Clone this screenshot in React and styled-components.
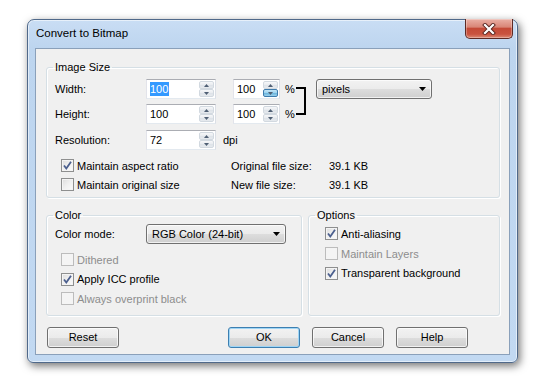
import React from 'react';
import styled, { createGlobalStyle } from 'styled-components';

const GlobalStyle = createGlobalStyle`
  html, body {
    margin: 0;
    padding: 0;
    background: #fff;
  }
  body {
    font-family: "Liberation Sans", Arial, sans-serif;
    font-size: 11px;
    color: #000;
  }
`;

export default function App() {
  return (
    <>
      <GlobalStyle />
      <Page>
        <Window>
          <TitleBar>
            <Title>Convert to Bitmap</Title>
            <CloseButton>
              <svg width="14" height="12" viewBox="0 0 14 12">
                <path d="M3 2 L11 10 M11 2 L3 10" stroke="#5a2620" strokeWidth="4" strokeLinecap="square" />
                <path d="M3 2 L11 10 M11 2 L3 10" stroke="#fff" strokeWidth="2.2" strokeLinecap="square" />
              </svg>
            </CloseButton>
          </TitleBar>

          <Client>
            <Group $bottom={3}>
              <Legend>Image Size</Legend>
              <SizeArea>
                <Fields>
                  <Row>
                    <Label>Width:</Label>
                    <Spin value="100" width={70} selected />
                    <Spin value="100" width={47} pressed gap={17} />
                    <Unit>%</Unit>
                  </Row>
                  <Row>
                    <Label>Height:</Label>
                    <Spin value="100" width={70} />
                    <Spin value="100" width={47} gap={17} />
                    <Unit>%</Unit>
                  </Row>
                </Fields>
                <Bracket />
                <Combo $width={116} $gap={10}>
                  <span>pixels</span>
                  <ComboArrow />
                </Combo>
              </SizeArea>
              <Row $top={6}>
                <Label>Resolution:</Label>
                <Spin value="72" width={70} />
                <Dpi>dpi</Dpi>
              </Row>
              <InfoGrid>
                <Check checked label="Maintain aspect ratio" />
                <Info>
                  <InfoLabel>Original file size:</InfoLabel>
                  <span>39.1 KB</span>
                </Info>
                <Check label="Maintain original size" />
                <Info>
                  <InfoLabel>New file size:</InfoLabel>
                  <span>39.1 KB</span>
                </Info>
              </InfoGrid>
            </Group>

            <LowerGroups>
              <Group $width={256} $top={2} $bottom={6}>
                <Legend>Color</Legend>
                <Row>
                  <Label>Color mode:</Label>
                  <Combo $width={140}>
                    <span>RGB Color (24-bit)</span>
                    <ComboArrow />
                  </Combo>
                </Row>
                <CheckList $top={6}>
                  <Check disabled label="Dithered" />
                  <Check checked label="Apply ICC profile" />
                  <Check disabled label="Always overprint black" />
                </CheckList>
              </Group>
              <Group $grow $top={2} $bottom={6}>
                <Legend>Options</Legend>
                <CheckList $indent={2} $pitch={19.7}>
                  <Check checked label="Anti-aliasing" />
                  <Check disabled label="Maintain Layers" />
                  <Check checked label="Transparent background" />
                </CheckList>
              </Group>
            </LowerGroups>

            <ButtonBar>
              <Button>Reset</Button>
              <Spacer />
              <Button $default>OK</Button>
              <Button>Cancel</Button>
              <Button>Help</Button>
            </ButtonBar>
          </Client>
        </Window>
      </Page>
    </>
  );
}

function Spin({ value, width, selected, pressed, gap = 0 }) {
  return (
    <SpinBox $width={width} $gap={gap}>
      <SpinText $selected={selected}>{value}</SpinText>
      <SpinButtons>
        <SpinHalf>
          <Arrow up />
        </SpinHalf>
        <SpinHalf $pressed={pressed}>
          <Arrow />
        </SpinHalf>
      </SpinButtons>
    </SpinBox>
  );
}

function Arrow({ up }) {
  return (
    <svg width="5" height="3" viewBox="0 0 5 3">
      <path d={up ? 'M0 3 L2.5 0 L5 3 Z' : 'M0 0 L5 0 L2.5 3 Z'} fill="#4f5f74" />
    </svg>
  );
}

function ComboArrow() {
  return (
    <svg width="7" height="4" viewBox="0 0 7 4">
      <path d="M0 0 L7 0 L3.5 4 Z" fill="#000" />
    </svg>
  );
}

function Check({ checked, disabled, label }) {
  return (
    <CheckRow $disabled={disabled}>
      <CheckBox $disabled={disabled}>
        {checked && (
          <svg width="11" height="11" viewBox="0 0 11 11">
            <path d="M2 5.5 L4.3 8.5 L9 1.8" fill="none" stroke="#4b5f8e" strokeWidth="1.8" />
          </svg>
        )}
      </CheckBox>
      {label}
    </CheckRow>
  );
}

const Page = styled.div`
  width: 543px;
  height: 382px;
  padding: 19px 0 0 27px;
  box-sizing: border-box;
`;

const Window = styled.div`
  width: 491px;
  height: 344px;
  box-sizing: border-box;
  border: 1px solid #50698a;
  border-radius: 7px 7px 6px 6px;
  background: linear-gradient(180deg, #c9ddf4 0px, #bdd5ef 28px, #c2d9f2 100%);
  box-shadow: 2px 3px 9px rgba(0, 0, 0, 0.55), inset 0 0 0 1px rgba(255, 255, 255, 0.55);
  display: flex;
  flex-direction: column;
`;

const TitleBar = styled.div`
  height: 28px;
  display: flex;
  align-items: flex-start;
  padding-left: 8px;
`;

const Title = styled.span`
  font-size: 11.5px;
  margin-top: 7px;
`;

const CloseButton = styled.div`
  margin: -1px 4px 0 auto;
  width: 48px;
  height: 20px;
  box-sizing: border-box;
  border: 1px solid #5e2a24;
  border-top: none;
  border-radius: 0 0 5px 5px;
  background: linear-gradient(180deg, #eab0a5 0%, #d98677 42%, #c44a37 50%, #c9533f 80%, #dc8a75 100%);
  box-shadow: inset 0 0 0 1px rgba(255, 255, 255, 0.3);
  display: flex;
  align-items: center;
  justify-content: center;
`;

const Client = styled.div`
  flex: 1;
  margin: 0 7px 7px 7px;
  background: #f0f0f0;
  border: 1px solid #8aa0ba;
  padding: 12px 9px 0 10px;
  display: flex;
  flex-direction: column;
`;

const Group = styled.fieldset`
  margin: 0;
  padding: ${(p) => p.$top ?? 3}px 8px ${(p) => p.$bottom ?? 5}px 8px;
  border: 1px solid #d5dfe5;
  border-radius: 3px;
  box-shadow: inset 1px 1px 0 #fff, 1px 1px 0 #fff;
  min-width: 0;
  box-sizing: border-box;
  ${(p) => (p.$width ? `width: ${p.$width}px;` : '')}
  ${(p) => (p.$grow ? 'flex: 1;' : '')}
`;

const Legend = styled.legend`
  padding: 0 2px;
  margin-left: -2px;
  line-height: 13px;
`;

const SizeArea = styled.div`
  display: flex;
  align-items: flex-start;
  margin-top: 2px;
`;

const Fields = styled.div`
  display: flex;
  flex-direction: column;
  gap: 5px;
`;

const Row = styled.div`
  display: flex;
  align-items: center;
  height: 20px;
  margin-top: ${(p) => p.$top || 0}px;
`;

const Label = styled.span`
  width: 91px;
  flex: none;
`;

const Unit = styled.span`
  margin-left: 5px;
  width: 11px;
`;

const Dpi = styled.span`
  margin-left: 7px;
`;

const Bracket = styled.div`
  width: 10px;
  height: 28px;
  margin: 8px 0 0 0;
  box-sizing: border-box;
  border: 2px solid #000;
  border-left: none;
`;

const SpinBox = styled.div`
  width: ${(p) => p.$width}px;
  height: 20px;
  margin-left: ${(p) => p.$gap}px;
  box-sizing: border-box;
  border: 1px solid;
  border-color: #abadb3 #dbdfe6 #e3e9ef #e2e3ea;
  background: #fff;
  display: flex;
  align-items: center;
  padding: 1px 1px 1px 3px;
`;

const SpinText = styled.span`
  flex: 1;
  line-height: 14px;
  color: ${(p) => (p.$selected ? '#fff' : '#000')};
  ${(p) =>
    p.$selected
      ? `background: linear-gradient(#3399ff, #3399ff) no-repeat 0 0 / 19px 100%;`
      : ''}
`;

const SpinButtons = styled.div`
  width: 15px;
  height: 16px;
  display: flex;
  flex-direction: column;
`;

const SpinHalf = styled.div`
  flex: 1;
  box-sizing: border-box;
  border: 1px solid ${(p) => (p.$pressed ? '#3d7bad' : '#d2d9e0')};
  border-radius: 2px;
  background: ${(p) =>
    p.$pressed
      ? 'linear-gradient(180deg, #c4e5f6 0%, #98d1ef 50%, #68b3db 51%, #9ad0ec 100%)'
      : 'linear-gradient(180deg, #f6f7f9 0%, #e8ebef 50%, #dde2e8 51%, #e6eaee 100%)'};
  display: flex;
  align-items: center;
  justify-content: center;
`;

const Combo = styled.div`
  width: ${(p) => p.$width}px;
  height: 20px;
  margin-left: ${(p) => p.$gap || 0}px;
  box-sizing: border-box;
  border: 1px solid #707070;
  border-radius: 3px;
  background: linear-gradient(180deg, #f2f2f2 0%, #ebebeb 50%, #dddddd 51%, #cfcfcf 100%);
  box-shadow: inset 0 0 0 1px rgba(255, 255, 255, 0.7);
  display: flex;
  align-items: center;
  justify-content: space-between;
  padding: 0 5px 0 5px;
`;

const InfoGrid = styled.div`
  display: grid;
  grid-template-columns: 170px 1fr;
  grid-auto-rows: 19px;
  margin-top: 6px;
  padding-left: 6px;
`;

const Info = styled.div`
  display: flex;
  align-items: center;
`;

const InfoLabel = styled.span`
  width: 98px;
`;

const LowerGroups = styled.div`
  display: flex;
  gap: 6px;
  margin-top: 11px;
`;

const CheckList = styled.div`
  display: flex;
  flex-direction: column;
  margin-top: ${(p) => p.$top || 0}px;
  padding-left: ${(p) => 6 + (p.$indent || 0)}px;

  & > label {
    height: ${(p) => p.$pitch || 19.5}px;
  }
`;

const CheckRow = styled.label`
  display: flex;
  align-items: center;
  gap: 3px;
  color: ${(p) => (p.$disabled ? '#8d8d8d' : '#000')};
`;

const CheckBox = styled.span`
  width: 13px;
  height: 13px;
  box-sizing: border-box;
  flex: none;
  border: 1px solid ${(p) => (p.$disabled ? '#bcbcbc' : '#8e8f8f')};
  background: ${(p) =>
    p.$disabled
      ? '#f4f4f4'
      : 'linear-gradient(135deg, #dcdcdc 0%, #f0f0f0 50%, #fbfbfb 100%)'};
  box-shadow: inset 0 0 0 1px #f4f4f4;
  display: flex;
  align-items: center;
  justify-content: center;
`;

const ButtonBar = styled.div`
  display: flex;
  gap: 12px;
  margin-top: 11px;
  padding: 0 32px 0 1px;
`;

const Spacer = styled.div`
  flex: 1;
`;

const Button = styled.div`
  width: 72px;
  height: 21px;
  box-sizing: border-box;
  border: 1px solid ${(p) => (p.$default ? '#3c7fb1' : '#707070')};
  border-radius: 3px;
  background: linear-gradient(180deg, #f2f2f2 0%, #ebebeb 50%, #dddddd 51%, #cfcfcf 100%);
  box-shadow: inset 0 0 0 1px ${(p) => (p.$default ? '#9fd5f5' : 'rgba(255, 255, 255, 0.7)')};
  display: flex;
  align-items: center;
  justify-content: center;
`;
